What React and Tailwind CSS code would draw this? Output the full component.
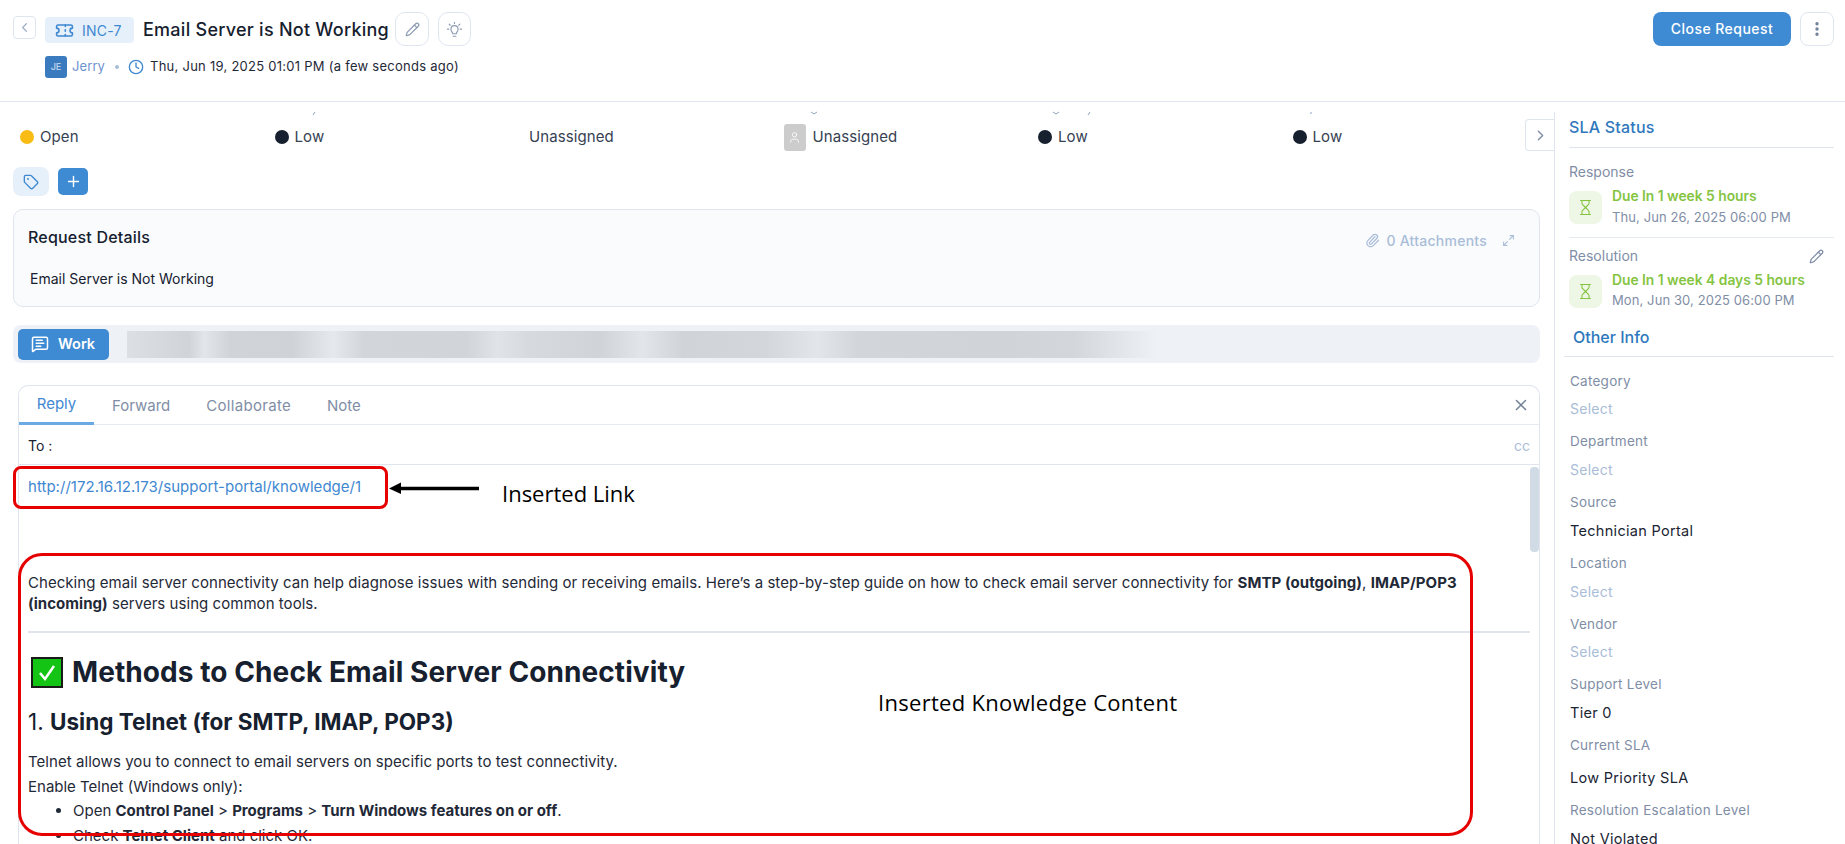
import React from "react";
import { ChevronLeft, ChevronRight, Ticket, Pencil, Clock, EllipsisVertical, Tag, Plus, Paperclip, Maximize2, X, Hourglass, User, MessageSquareText } from "lucide-react";

function Status({ dot, avatar, children }) {
  return (
    <div className="flex items-center h-[28px]">
      {dot && <span className="w-[14px] h-[14px] rounded-full mr-[6px]" style={{ background: dot }} />}
      {avatar && (
        <span className="w-[22px] h-[27px] rounded-[3px] bg-[#cccccc] flex items-center justify-center mr-[7px]">
          <User size={13} className="text-white" strokeWidth={1.5} />
        </span>
      )}
      <span className="text-[15px] tracking-[0.1px] text-[#364152]">{children}</span>
    </div>
  );
}

function SlaRow({ due, date, gap }) {
  return (
    <div className="flex items-start gap-[10px] h-[33px]">
      <div className="w-[33px] h-[33px] rounded-[8px] bg-[#eef7e5] flex items-center justify-center">
        <Hourglass size={17} className="text-[#84c441]" strokeWidth={1.5} />
      </div>
      <div className="flex flex-col -mt-[3px]">
        <div className="text-[13.8px] leading-[16px] font-semibold text-[#84c441] whitespace-nowrap">{due}</div>
        <div className={"text-[13px] leading-[16px] text-[#7f8ea6] whitespace-nowrap tracking-[0.1px] " + gap}>{date}</div>
      </div>
    </div>
  );
}

function Field({ label, value, h, gap = "mt-[8px]" }) {
  return (
    <div className={h}>
      <div className="text-[13.5px] leading-[20px] text-[#7f8ea6] tracking-[0.25px]">{label}</div>
      <div className={gap + " " + (value ? "text-[14.5px] leading-[20px] tracking-[0.3px] text-[#1a2433]" : "text-[14px] leading-[20px] tracking-[0.25px] text-[#a9bdd8]")}>{value || "Select"}</div>
    </div>
  );
}

function Tick({ className, d }) {
  return (
    <svg className={"absolute top-[9px] " + className} width="8" height="5" viewBox="0 0 8 5">
      <path d={d} fill="none" stroke="#8fa3c4" strokeWidth="1" />
    </svg>
  );
}

export default function App() {
  return (
    <div className="relative w-full h-[844px] overflow-hidden bg-white text-[#16202e]" style={{ fontFamily: "Inter, 'Noto Sans', sans-serif" }}>
      {/* Header */}
      <header className="h-[102px] border-b border-[#dfe4ee] flex justify-between pl-[13px] pr-[11px] pt-[12px]">
        <div className="flex items-start">
          <button className="w-[23px] h-[23px] mt-[4px] border border-[#dfe5ef] rounded-[4px] flex items-center justify-center text-[#9fb0c8]">
            <ChevronLeft size={15} />
          </button>
          <div className="ml-[9px]">
            <div className="flex items-start">
              <div className="w-[89px] h-[26px] mt-[5px] bg-[#e6f0fa] rounded-[4px] flex items-center pl-[10px] gap-[8px] text-[#3f88d1]">
                <Ticket size={19} strokeWidth={2} />
                <span className="text-[14px] tracking-[0.2px]">INC-7</span>
              </div>
              <h1 className="ml-[9px] w-[247px] text-[18px] leading-[36px] font-medium tracking-[0.26px] whitespace-nowrap">Email Server is Not Working</h1>
              <button className="ml-[5px] w-[34px] h-[34px] border border-[#dfe5ef] rounded-[10px] flex items-center justify-center text-[#8d9cb3]">
                <Pencil size={15} />
              </button>
              <button className="ml-[9px] w-[33px] h-[34px] border border-[#dfe5ef] rounded-[10px] flex items-center justify-center text-[#8d9cb3]">
                <svg width="17" height="17" viewBox="0 0 24 24" fill="none" stroke="currentColor" strokeWidth="1.6" strokeLinecap="round" strokeLinejoin="round">
                  <path d="M9.5 18c0-2-2.5-3-2.5-6.500a5 5 0 0 1 10 0c0 3.500-2.500 4.500-2.500 6.500z" />
                  <path d="M10 21.500h4" />
                  <path d="M12 2v1.500M4.500 4.500L6 6M19.500 4.500L18 6M2 11.500h2M20 11.500h2" />
                </svg>
              </button>
            </div>
            <div className="flex items-center mt-[8px] h-[22px]">
              <div className="w-[22px] h-[22px] rounded-[3px] bg-[#3a7abf] text-[#b7cfe8] text-[9px] font-semibold flex items-center justify-center">JE</div>
              <span className="ml-[5px] text-[13px] tracking-[0.1px] text-[#6d92cf]">Jerry</span>
              <span className="ml-[10px] w-[4px] h-[4px] rounded-full bg-[#a9bdd8]" />
              <Clock size={16} className="ml-[9px] text-[#3f88d1]" />
              <span className="ml-[6px] text-[13px] tracking-[0.26px] text-[#1f2937] whitespace-nowrap">Thu, Jun 19, 2025 01:01 PM (a few seconds ago)</span>
            </div>
          </div>
        </div>
        <div className="flex items-start gap-[9px]">
          <button className="w-[138px] h-[34px] pb-[2px] rounded-[8px] bg-[#3f8bd3] text-white text-[14px] font-medium tracking-[0.45px]">Close Request</button>
          <button className="w-[34px] h-[34px] border border-[#dfe5ef] rounded-[8px] flex items-center justify-center text-[#6f7f96]">
            <EllipsisVertical size={18} strokeWidth={2.5} />
          </button>
        </div>
      </header>

      <div className="flex h-[742px]">
        {/* Main */}
        <main className="w-[1554px] shrink-0 pl-[13px] pr-[14px] relative">
          <Tick className="left-[310px]" d="M3 4L5 1" />
          <Tick className="left-[810px]" d="M1 1l3 2 3-2" />
          <Tick className="left-[1052px]" d="M1 1l3 2 3-2" />
          <Tick className="left-[1085px]" d="M3 4L5 1" />
          <Tick className="left-[1307px]" d="M4 1v2" />
          <div className="grid grid-cols-[repeat(6,254.5px)] ml-[7px] pt-[21px] h-[65px]">
            <Status dot="#f9bc15">Open</Status>
            <Status dot="#16202e">Low</Status>
            <Status>Unassigned</Status>
            <Status avatar>Unassigned</Status>
            <Status dot="#16202e">Low</Status>
            <Status dot="#16202e">Low</Status>
          </div>
          <button className="absolute right-0 top-[17px] w-[29px] h-[32px] border border-r-0 border-[#dfe5ef] rounded-l-[4px] bg-white flex items-center justify-center text-[#7f8ea6]">
            <ChevronRight size={17} />
          </button>
          <div className="flex items-center gap-[9px]">
            <div className="w-[36px] h-[29px] rounded-[8px] bg-[#e6f0fa] flex items-center justify-center text-[#3f88d1]">
              <Tag size={16} />
            </div>
            <div className="w-[30px] h-[27px] rounded-[5px] bg-[#3f8bd3] flex items-center justify-center text-white">
              <Plus size={17} />
            </div>
          </div>

          <section className="mt-[13px] h-[98px] border border-[#dfe4ee] rounded-[10px] bg-[#f9fbfd] pl-[14px] pr-[14px] pt-[14px]">
            <div className="flex justify-between items-center h-[32px]">
              <h2 className="-mt-[7px] text-[16px] font-medium tracking-[0.2px]">Request Details</h2>
              <div className="flex items-center">
                <Paperclip size={15} className="text-[#a9bdd8]" />
                <span className="ml-[6px] text-[14px] font-medium tracking-[0.25px] text-[#a9bdd8]">0 Attachments</span>
                <div className="ml-[5px] w-[33px] h-[32px] flex items-center justify-center text-[#a9bdd8]">
                  <Maximize2 size={13} />
                </div>
              </div>
            </div>
            <p className="mt-[13px] ml-[2px] text-[14px] leading-[20px]">Email Server is Not Working</p>
          </section>

          <div className="mt-[18px] h-[38px] rounded-[8px] bg-[#eef1f6] flex items-center pl-[5px]">
            <button className="w-[91px] h-[31px] rounded-[5px] bg-[#3f8bd3] text-white flex items-center pl-[13px] gap-[9px]">
              <MessageSquareText size={18} />
              <span className="text-[14.5px] font-semibold">Work</span>
            </button>
            <div className="ml-[18px] w-[1030px] h-[27px] bg-[linear-gradient(90deg,#dcdfe4_0%,#d0d4d9_6%,#e2e5ea_7.5%,#d0d4d9_10%,#cfd3d8_16%,#e5e8ec_20%,#d2d6db_23%,#d1d5da_33%,#e0e3e8_36%,#d6d9de_39%,#d0d4d9_46%,#e2e5ea_50%,#d0d4d9_54%,#d3d6db_62%,#e2e5ea_67%,#d2d6da_71%,#d0d4d9_85%,#d3d7dc_92%,#eef1f6_100%)]" />
          </div>

          <section className="relative mt-[22px] ml-[5px] border border-b-0 border-[#dfe4ee] rounded-t-[10px] h-[460px] overflow-hidden">
            <div className="flex h-[39px] border-b border-[#e6eaf1] relative">
              <div className="w-[75px] h-[39px] border-b-[3px] border-[#6aa9e2] text-[#3f88d1] text-[15px] flex items-center justify-center">Reply</div>
              <div className="ml-[18px] text-[15px] leading-[39px] text-[#7f8ea6]">Forward</div>
              <div className="ml-[36px] text-[15px] leading-[39px] tracking-[0.3px] text-[#7f8ea6]">Collaborate</div>
              <div className="ml-[36px] text-[15px] leading-[39px] text-[#7f8ea6]">Note</div>
              <X size={18} className="absolute right-[9px] top-[10px] text-[#6f7f96]" />
            </div>
            <div className="h-[40px] border-b border-[#dfe4ee] flex items-center justify-between pl-[9px] pr-[9px] pt-[2px]">
              <span className="text-[14px]">To :</span>
              <span className="text-[14px] text-[#a9bdd8]">cc</span>
            </div>
            <div className="relative px-[9px]">
              <a className="block pt-[12px] text-[15px] leading-[20px] tracking-[0.03px] text-[#3f88d1] whitespace-nowrap">http://172.16.12.173/support-portal/knowledge/1</a>
              <p className="mt-[76px] text-[15px] leading-[20.5px] tracking-[0.045px] whitespace-nowrap text-[#1f2937]">
                Checking email server connectivity can help diagnose issues with sending or receiving emails. Here’s a step-by-step guide on how to check email server connectivity for <b>SMTP (outgoing)</b>, <b>IMAP/POP3</b>
                <br />
                <b>(incoming)</b> servers using common tools.
              </p>
              <hr className="mt-[17px] w-[1502px] border-t-2 border-[#dfe4ee]" />
              <h1 className="mt-[23px] flex items-center gap-[9px] text-[28px] leading-[32px] font-bold tracking-[0.08px] whitespace-nowrap">
                <svg width="32" height="31" viewBox="0 0 32 31" className="ml-[3px]">
                  <rect x="1" y="1" width="30" height="29" fill="#14c414" stroke="#1a1a1a" strokeWidth="2" />
                  <path d="M9 16l5 6 9-13" fill="none" stroke="#fff" strokeWidth="2.500" />
                </svg>
                Methods to Check Email Server Connectivity
              </h1>
              <h2 className="mt-[18px] text-[22.5px] leading-[32px] whitespace-nowrap">1. <b>Using Telnet (for SMTP, IMAP, POP3)</b></h2>
              <p className="mt-[12px] text-[15px] leading-[24.5px] tracking-[0.05px] whitespace-nowrap text-[#1f2937]">Telnet allows you to connect to email servers on specific ports to test connectivity.</p>
              <p className="text-[15px] leading-[24.5px] whitespace-nowrap text-[#1f2937]">Enable Telnet (Windows only):</p>
              <ul className="list-disc pl-[45px] text-[15px] leading-[24.5px] whitespace-nowrap text-[#1f2937]">
                <li>Open <b>Control Panel</b> &gt; <b>Programs</b> &gt; <b>Turn Windows features on or off</b>.</li>
                <li>Check <b>Telnet Client</b> and click OK.</li>
              </ul>
            </div>
            <div className="absolute right-0 top-[81px] w-[9px] h-[85px] rounded-[4px] bg-[#d0dbe6]" />
          </section>
        </main>

        {/* Sidebar */}
        <aside className="mt-[10px] flex-1 border-l border-[#dfe4ee] pl-[14px] pr-[11px]">
          <h3 className="text-[16px] font-medium tracking-[0.2px] text-[#2f78bd] leading-[30px] border-b border-[#dfe4ee] h-[36px]">SLA Status</h3>
          <div className="h-[90px] border-b border-[#e6eaf1] pt-[14px]">
            <div className="text-[14px] leading-[20px] text-[#7f8ea6] mb-[9px]">Response</div>
            <SlaRow due="Due In 1 week 5 hours" date="Thu, Jun 26, 2025 06:00 PM" gap="mt-[5px]" />
          </div>
          <div className="pt-[8px] relative">
            <div className="text-[14px] leading-[20px] text-[#7f8ea6] mb-[9px]">Resolution</div>
            <Pencil size={15} className="absolute right-[10px] top-[11px] text-[#7f8ea6]" />
            <SlaRow due="Due In 1 week 4 days 5 hours" date="Mon, Jun 30, 2025 06:00 PM" gap="mt-[4px]" />
          </div>
          <h3 className="-ml-[5px] mt-[14px] pl-[9px] text-[16px] font-medium text-[#2f78bd] leading-[30px] h-[35px] border-b border-[#dfe4ee]">Other Info</h3>
          <div className="mt-[14px] pl-[1px]">
            <Field label="Category" h="h-[60px]" />
            <Field label="Department" h="h-[61px]" gap="mt-[9px]" />
            <Field label="Source" value="Technician Portal" h="h-[61px]" gap="mt-[9px]" />
            <Field label="Location" h="h-[61px]" gap="mt-[9px]" />
            <Field label="Vendor" h="h-[60px]" />
            <Field label="Support Level" value="Tier 0" h="h-[61px]" gap="mt-[9px]" />
            <Field label="Current SLA" value="Low Priority SLA" h="h-[65px]" gap="mt-[13px]" />
            <Field label="Resolution Escalation Level" value="Not Violated" h="h-[60px]" gap="mt-[9px]" />
          </div>
        </aside>
      </div>

      {/* Annotations over the screenshot */}
      <div className="absolute left-[13px] top-[466px] w-[375px] h-[43px] border-[3px] border-[#e60000] rounded-[8px]" />
      <svg className="absolute left-[388px] top-[480px]" width="92" height="16" viewBox="0 0 92 16">
        <path d="M91 8.500H12" stroke="#000" strokeWidth="3.500" />
        <path d="M13 2.500L1 8.500l12 5.500z" fill="#000" />
      </svg>
      <div className="absolute left-[502px] top-[478px] text-[22px] leading-[30px] text-black whitespace-nowrap" style={{ fontFamily: "'Open Sans', sans-serif" }}>Inserted Link</div>
      <div className="absolute left-[18px] top-[553px] w-[1455px] h-[283px] border-[3px] border-[#e60000] rounded-[24px]" />
      <div className="absolute left-[878px] top-[687px] text-[22px] leading-[30px] tracking-[0.3px] text-black whitespace-nowrap" style={{ fontFamily: "'Open Sans', sans-serif" }}>Inserted Knowledge Content</div>
    </div>
  );
}
